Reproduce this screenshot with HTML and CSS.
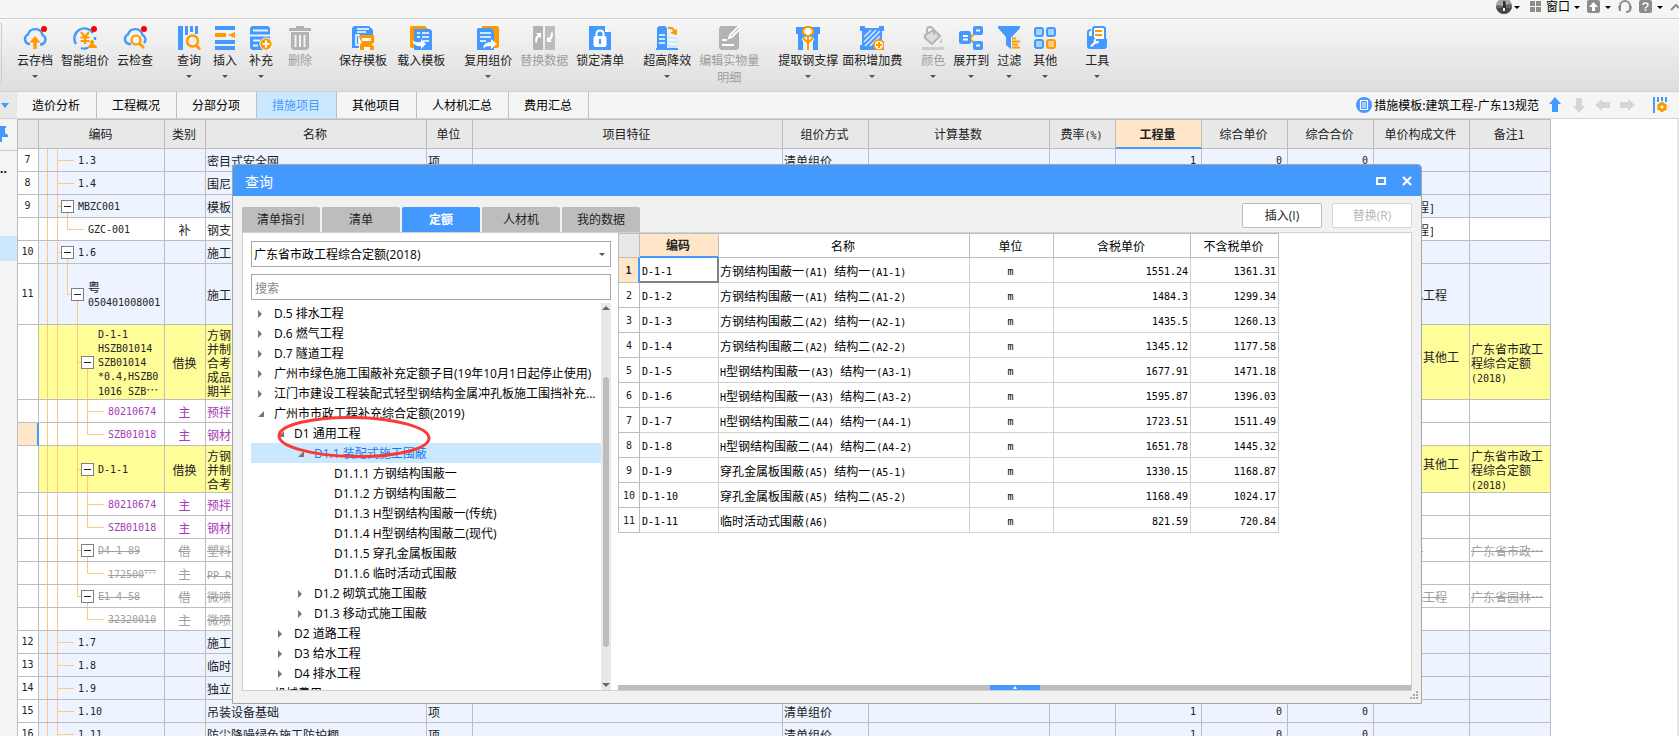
FILE: index.html
```html
<!DOCTYPE html>
<html lang="zh-CN">
<head>
<meta charset="utf-8">
<title>措施项目</title>
<link rel="stylesheet" href="styles.css">
</head>
<body>
<header class="topbar">
  <button class="tb avatar" aria-label="用户"><svg width="16" height="16" viewBox="0 0 16 16"><circle cx="8" cy="7" r="8" fill="#a4a8a8"/><path d="M0 7h16a8 8 0 0 1-16 0z" fill="#4c4742"/><path d="M0 7q3-2 5 0t6-1 5 1v2H0z" fill="#6d6963"/><path d="M7 2h2l1 4v6H7V6z" fill="#333"/><path d="M7 9h2v3H7z" fill="#eee"/></svg><i class="caret"></i></button>
  <button class="tb window"><svg width="12" height="12" viewBox="0 0 12 12" fill="#8c8c8c"><path d="M0 0h5v5H0zM6 0h5v5H6zM0 6h5v5H0zM6 6h5v5H6z"/></svg><span>窗口</span><i class="caret"></i></button>
  <button class="tb" aria-label="升级"><svg width="14" height="14" viewBox="0 0 14 14"><rect width="13" height="13" rx="2" fill="#8c8c8c"/><path d="M6.500 2l4.500 5H8v4H5V7H2z" fill="#fff"/></svg><i class="caret"></i></button>
  <button class="tb" aria-label="客服"><svg width="14" height="14" viewBox="0 0 14 14"><path d="M2 8V6a5 5 0 0 1 10 0v3q0 3-4 3" fill="none" stroke="#8c8c8c" stroke-width="2"/><path d="M0 6h3v5H1zM11 6h3l-1 5h-2z" fill="#8c8c8c"/></svg></button>
  <button class="tb" aria-label="帮助"><svg width="14" height="14" viewBox="0 0 14 14"><rect width="13" height="13" rx="2" fill="#8c8c8c"/><path d="M4 5q0-2 2.500-2T9 5q0 1-1.500 2T6.500 8.500" fill="none" stroke="#fff" stroke-width="1.500"/><path d="M5.700 9.500h1.600V11H5.700z" fill="#fff"/></svg><i class="caret"></i></button>
  <button class="tb" aria-label="收起"><svg width="9" height="8" viewBox="0 0 9 8"><path d="M1 7l5-5 3 3" fill="none" stroke="#8c8c8c" stroke-width="2"/></svg></button>
</header>

<nav class="ribbon">
  <div class="edge"></div>
  <div class="group wide">
    <button class="rb"><svg class="ic" viewBox="0 0 24 24"><path d="M7 18H6a5 5 0 0 1-1-9.500A7.500 7.500 0 0 1 19.500 9 5 5 0 0 1 18 18.500h-1" fill="none" stroke="#49f" stroke-width="2.400"/><path d="M12 10l5.500 6.500h-3.800V23h-3.400v-6.500H6.500z" fill="#f90"/><circle cx="21" cy="3" r="3" fill="#f00"/></svg>云存档<i class="caret"></i></button>
    <button class="rb"><svg class="ic" viewBox="0 0 24 24"><path d="M20 7A10 10 0 1 0 3 18M8 22q4 1.500 7-.5M22 11v3" fill="none" stroke="#49f" stroke-width="2.400"/><path d="M8 6l4 5 4-5M12 11v7M7.500 11.500h9M7.500 15h9" fill="none" stroke="#f90" stroke-width="2.200"/><path d="M15 22q0-3 3-4a2 2 0 1 1 2 0q4 1 4 4z" fill="#f90"/><circle cx="21" cy="3" r="3" fill="#f00"/></svg>智能组价</button>
    <button class="rb"><svg class="ic" viewBox="0 0 24 24"><path d="M8 18H6a5 5 0 0 1-1-9.500A7.500 7.500 0 0 1 19.500 9 5 5 0 0 1 21 17" fill="none" stroke="#49f" stroke-width="2.400"/><circle cx="13" cy="14" r="4.500" fill="#f1f1f1" stroke="#f90" stroke-width="2.200"/><path d="M16 17l5 5" stroke="#f90" stroke-width="2.600"/><circle cx="21" cy="3" r="3" fill="#f00"/></svg>云检查</button>
  </div>
  <div class="group gap12 wide">
    <button class="rb"><svg class="ic" viewBox="0 0 24 24"><path d="M1 0h5v24H1zM8 0h3v9H8zM13 0h3v6h-3zM18 0h3v8h-3z" fill="#49f"/><circle cx="15.500" cy="15" r="5.500" fill="none" stroke="#f90" stroke-width="2.400"/><path d="M19 19l4 4.500" stroke="#f90" stroke-width="2.800"/></svg>查询<i class="caret"></i></button>
    <button class="rb"><svg class="ic" viewBox="0 0 24 24"><path d="M2 0h20v4H2zM2 14h20v4H2zM2 20h20v4H2z" fill="#49f"/><path d="M2 7h11v4H2zM15 9l7-3v6z" fill="#f90"/></svg>插入<i class="caret"></i></button>
    <button class="rb"><svg class="ic" viewBox="0 0 24 24"><path d="M3 0h16l2 2v20l-2 2H3l-2-2V2z" fill="#49f"/><path d="M4 4.500h15M1 9.500h20M4 14.500h7M4 19.500h5" stroke="#e8f3ff" stroke-width="2"/><circle cx="17" cy="18" r="6.500" fill="#fff"/><circle cx="17" cy="18" r="5.700" fill="#f90"/><path d="M17 14.500v7M13.500 18h7" stroke="#fff" stroke-width="2"/></svg>补充<i class="caret"></i></button>
    <button class="rb off pad3" disabled><svg class="ic" viewBox="0 0 24 24"><path d="M1 2h7V0h8v2h7v3H1zM3 6h18v16l-2 2H5l-2-2z" fill="#b3b3b3"/><path d="M7.500 9v12M12 9v12M16.500 9v12" stroke="#f4f4f4" stroke-width="2"/></svg>删除</button>
  </div>
  <div class="group gap10">
    <button class="rb"><svg class="ic" viewBox="0 0 24 24"><path d="M3 0h15l4 4v18H1V2z" fill="#49f"/><path d="M6 3h12M6 6h9M5 9h3v10H5z" fill="none" stroke="#fff" stroke-width="1.500"/><path d="M8 10h15v14H8z" fill="#fff"/><path d="M8 11q0-2 2-2h13v8l-2 1v1l2 1v4H9v-6l2-1z" fill="#f90"/><path d="M11 12h9v3h-9zM13 21h6v3h-6z" fill="#fff"/></svg>保存模板</button>
    <button class="rb"><svg class="ic" viewBox="0 0 24 24"><path d="M1 2q0-2 2-2h13l3 3v19H3q-2 0-2-2z" fill="#f90"/><path d="M5 3h16l2 2v19H5z" fill="#49f"/><path d="M8 7h3M13 7h7M8 11h3M13 11h7M14 15h6" stroke="#fff" stroke-width="1.600"/><path d="M3 14q3 3 9 2v-3l5 5-5 5v-3q-7 1-9-6z" fill="#fff"/></svg>载入模板</button>
  </div>
  <div class="group gap8">
    <button class="rb"><svg class="ic" viewBox="0 0 24 24"><path d="M6 0h15q2 0 2 2v18q0 2-3 2H6z" fill="#f90"/><path d="M1 4q0-2 2-2h12l3 3v19H1z" fill="#49f"/><path d="M4 7h11M4 11h11M4 15h6" stroke="#fff" stroke-width="1.600"/><path d="M7 22q1-6 8-6v-3l6 5-6 5v-3q-5 0-8 2z" fill="#fff"/></svg>复用组价<i class="caret"></i></button>
    <button class="rb off" disabled><svg class="ic" viewBox="0 0 24 24"><path d="M1 0h10v24H1z" fill="#b3b3b3"/><path d="M13 0h10v24H13z" fill="#bdbdbd"/><path d="M3 16q0-6 3-7L4 7h5v5l-2-1q-2 1-2 6zM21 7q0 6-3 7l2 2h-5v-5l2 1q2-1 2-6z" fill="#fff"/></svg>替换数据</button>
    <button class="rb"><svg class="ic" viewBox="0 0 24 24"><path d="M1 0h16l6 6v18H1z" fill="#49f"/><path d="M17 0l6 6h-6z" fill="#fff"/><rect x="5.500" y="10" width="13" height="11" rx="2" fill="#fff"/><path d="M8.500 11V8q0-3.500 3.500-3.500T15.500 8v3" fill="none" stroke="#fff" stroke-width="2"/><path d="M11 13h2v5h-2z" fill="#49f"/></svg>锁定清单</button>
  </div>
  <div class="group gap8">
    <button class="rb"><svg class="ic" viewBox="0 0 24 24"><path d="M2 2l2-2h6l2 2v20H2z" fill="#49f"/><path d="M13 11h9v11h-9z" fill="#cce8ff"/><path d="M4 9h6M4 13h6M4 17h6M14 14h7M14 18h7" stroke="#fff" stroke-width="1.600"/><path d="M1 22h22v2H1z" fill="#49f"/><path d="M13 2q6-1 6 4" fill="none" stroke="#f90" stroke-width="2.200"/><path d="M15 7l7-4v6z" fill="#f90"/></svg>超高降效<i class="caret"></i></button>
    <button class="rb off" disabled><svg class="ic" viewBox="0 0 24 24"><path d="M4 0h17l1 2v20l-2 2H4l-2-2V2z" fill="#b3b3b3"/><path d="M22 0l-9 9-1 3 3-1 9-9" fill="none" stroke="#fff" stroke-width="1.800"/><path d="M5 14h5M5 19h12" stroke="#fff" stroke-width="2"/></svg>编辑实物量<br>明细</button>
  </div>
  <div class="group gap4">
    <button class="rb"><svg class="ic" viewBox="0 0 24 24"><path d="M0 1h24v7h-2v16h-5V14l-5-4-5 4v10H2V8H0z" fill="#49f"/><path d="M12 9v15M12 17l-5-5M12 17l5-5" fill="none" stroke="#fff" stroke-width="4"/><path d="M7 4l3-3h4l3 3v3l-4 3h-2L7 7z" fill="#fff" stroke="#f90" stroke-width="2"/><path d="M12 9v15M12 17l-5-5M12 17l5-5" fill="none" stroke="#f90" stroke-width="2"/></svg>提取钢支撑<i class="caret"></i></button>
    <button class="rb"><svg class="ic" viewBox="0 0 24 24"><path d="M0 0h5v2h14V0h5v5h-2v14h2v5H0v-5h2V5H0z" fill="#49f"/><path d="M4 11l7-7M4 16L16 4M5 20L20 5M10 20L20 10" stroke="#d9ecff" stroke-width="1.500"/><circle cx="19" cy="19" r="5" fill="#fff" stroke="#f90" stroke-width="2"/><path d="M19 16v6M16 19h6" stroke="#f90" stroke-width="2"/></svg>面积增加费<i class="caret"></i></button>
  </div>
  <div class="group gap8 wide">
    <button class="rb off" disabled><svg class="ic" viewBox="0 0 24 24"><path d="M4 9l9-5 6 6-8 8-7-6z" fill="#ddd" stroke="#b3b3b3" stroke-width="2"/><path d="M6 8V4q0-3 3-3t4 4v4" fill="none" stroke="#b3b3b3" stroke-width="2"/><path d="M19 15l2-3v5h-2z" fill="#c4c4c4"/><path d="M1 21h22v3H1z" fill="#ccc"/></svg>颜色<i class="caret"></i></button>
    <button class="rb"><svg class="ic" viewBox="0 0 24 24"><path d="M11 12l6-6M11 13l6 6" stroke="#f90" stroke-width="2"/><rect y="5" width="12" height="13" rx="2.500" fill="#49f"/><rect x="14" width="10" height="9" rx="2" fill="#49f"/><rect x="14" y="15" width="10" height="9" rx="2" fill="#49f"/><path d="M4 10h5M4 13.500h5M17 4.500h4M17 19.500h4" stroke="#fff" stroke-width="1.800"/></svg>展开到<i class="caret"></i></button>
    <button class="rb"><svg class="ic" viewBox="0 0 24 24"><path d="M1 0h22v2l-8 9v13l-6-5v-8L1 2z" fill="#49f"/><path d="M14 11h10v13H14z" fill="#ececec"/><path d="M15 12.500h4M15 15.500h8M15 18.500h6M15 21.500h8" stroke="#f90" stroke-width="1.800"/></svg>过滤<i class="caret"></i></button>
    <button class="rb pad4"><svg class="ic" viewBox="0 0 24 24" fill="#a8d2ff" stroke="#49f" stroke-width="2"><rect x="2" y="2" width="8" height="8" rx="2"/><rect x="14" y="2" width="8" height="8" rx="2"/><rect x="2" y="14" width="8" height="8" rx="2"/><rect x="14" y="14" width="8" height="8" rx="2" fill="#ffcb80" stroke="#f90"/></svg>其他<i class="caret"></i></button>
  </div>
  <div class="group">
    <button class="rb"><svg class="ic" viewBox="0 0 24 24"><path d="M3 10V6q0-2 3-2" fill="none" stroke="#49f" stroke-width="2"/><path d="M8 3q0-2 2-2h8q2 0 2 2v12H8z" fill="#fff" stroke="#49f" stroke-width="2"/><path d="M10 5h7M10 9h7" stroke="#f90" stroke-width="2"/><path d="M2 10h6l3 3h11v7q0 3-3 3H5q-3 0-3-3z" fill="#49f"/><path d="M5 20l4-4q-1-3 2-4v3h3q0 3-4 3l-3 3z" fill="#fff"/></svg>工具<i class="caret"></i></button>
  </div>
</nav>

<div class="tabstrip">
  <div class="tabs-left"><i class="caret blue"></i></div>
  <button class="tab">造价分析</button><button class="tab">工程概况</button><button class="tab">分部分项</button><button class="tab on">措施项目</button><button class="tab">其他项目</button><button class="tab">人材机汇总</button><button class="tab">费用汇总</button>
  <div class="tools">
    <button class="tpl"><svg width="16" height="16" viewBox="0 0 16 16"><circle cx="8" cy="8" r="8" fill="#49f"/><path d="M4.500 3.500h7v9h-7z" fill="none" stroke="#fff" stroke-width="1.200"/><path d="M6 6h4M6 8h4M6 10h4" stroke="#fff"/></svg>措施模板:建筑工程-广东13规范</button>
    <button class="mv" aria-label="上移"><svg viewBox="0 0 16 16"><path d="M8 0l6 7h-3v8H5V7H2z" fill="#49f"/></svg></button>
    <button class="mv" aria-label="下移"><svg viewBox="0 0 16 16"><path d="M8 16l6-7h-3V1H5v8H2z" fill="#d6d6d6"/></svg></button>
    <button class="mv" aria-label="左移"><svg viewBox="0 0 16 16"><path d="M0 8l7-6v3h8v6H7v3z" fill="#d6d6d6"/></svg></button>
    <button class="mv" aria-label="右移"><svg viewBox="0 0 16 16"><path d="M16 8L9 2v3H1v6h8v3z" fill="#d6d6d6"/></svg></button>
    <button class="mv set" aria-label="列设置"><svg viewBox="0 0 16 16"><path d="M1 0h2v16H1zM5 0h2v5H5zM9 0h2v4H9zM13 0h2v5h-2z" fill="#49f"/><circle cx="10" cy="10" r="3.200" fill="none" stroke="#f90" stroke-width="3"/><path d="M10 5v10M5.500 7.500l9 5M5.500 12.500l9-5" stroke="#f90" stroke-width="2"/><circle cx="10" cy="10" r="1.500" fill="#fff"/></svg></button>
  </div>
</div>

<main class="work">
  <aside class="side">
    <div class="pin"><svg width="8" height="16" viewBox="0 0 8 16"><path d="M0 0h6v2H5v5l3 2v2H2v5H0z" fill="#49f"/></svg></div>
    <div class="dots">..</div>
    <div class="sel"></div>
  </aside>
  <table class="grid">
    <colgroup><col class="w22"><col class="w126"><col class="w41"><col class="w221"><col class="w46"><col class="w310"><col class="w86"><col class="w181"><col class="w66"><col class="w86"><col class="w86"><col class="w86"><col class="w96"><col class="w81"></colgroup>
    <thead><tr><th></th><th>编码</th><th>类别</th><th>名称</th><th>单位</th><th>项目特征</th><th>组价方式</th><th>计算基数</th><th>费率<span class="m">(%)</span></th><th class="cur">工程量</th><th>综合单价</th><th>综合合价</th><th>单价构成文件</th><th>备注1</th></tr></thead>
    <tbody>
      <tr class="b"><th>7</th><td class="t leaf1"><div class="n p40">1.3</div></td><td></td><td>密目式安全网</td><td>项</td><td></td><td>清单组价</td><td></td><td></td><td class="r">1</td><td class="r">0</td><td class="r">0</td><td></td><td></td></tr>
      <tr class="b"><th>8</th><td class="t leaf1"><div class="n p40">1.4</div></td><td></td><td>围尼</td><td></td><td></td><td></td><td></td><td></td><td></td><td></td><td></td><td></td><td></td></tr>
      <tr class="b"><th>9</th><td class="t open1"><div class="n p22"><button class="tg" aria-label="折叠"></button>MBZC001</div></td><td></td><td>模板</td><td></td><td></td><td></td><td></td><td></td><td></td><td></td><td></td><td><span class="m">[</span>建筑工程<span class="m">]</span></td><td></td></tr>
      <tr><th></th><td class="t end2"><div class="n p50">GZC-001</div></td><td class="c">补</td><td>钢支</td><td></td><td></td><td></td><td></td><td></td><td></td><td></td><td></td><td><span class="m">[</span>建筑工程<span class="m">]</span></td><td></td></tr>
      <tr class="b"><th>10</th><td class="t open1"><div class="n p22"><button class="tg" aria-label="折叠"></button>1.6</div></td><td></td><td>施工</td><td></td><td></td><td></td><td></td><td></td><td></td><td></td><td></td><td></td><td></td></tr>
      <tr class="b h61"><th>11</th><td class="t open2"><div class="n p32"><button class="tg" aria-label="折叠"></button><div><span class="cjk">粤</span><br>050401008001</div></div></td><td></td><td>施工</td><td></td><td></td><td></td><td></td><td></td><td></td><td></td><td></td><td>园林绿化工程</td><td></td></tr>
      <tr class="y h75"><th></th><td class="t open3"><div class="n p42"><button class="tg" aria-label="折叠"></button><div>D-1-1<br>HSZB01014<br>SZB01014<br>*0.4,HSZB0<br>1016 SZB<span class="cjk">…</span></div></div></td><td class="c">借换</td><td>方钢<br>并制<br>合考<br>成品<br>期半</td><td></td><td></td><td></td><td></td><td></td><td></td><td></td><td></td><td class="clip">装配式：其他工</td><td>广东省市政工<br>程综合定额<br><span class="m">(2018)</span></td></tr>
      <tr class="v"><th></th><td class="t mid4"><div class="n p70">80210674</div></td><td class="c">主</td><td>预拌</td><td></td><td></td><td></td><td></td><td></td><td></td><td></td><td></td><td></td><td></td></tr>
      <tr class="v"><th class="cur-row"></th><td class="t end4"><div class="n p70">SZB01018</div></td><td class="c">主</td><td>钢材</td><td></td><td></td><td></td><td></td><td></td><td></td><td></td><td></td><td></td><td></td></tr>
      <tr class="y h47"><th></th><td class="t open3"><div class="n p42"><button class="tg" aria-label="折叠"></button>D-1-1</div></td><td class="c">借换</td><td>方钢<br>并制<br>合考</td><td></td><td></td><td></td><td></td><td></td><td></td><td></td><td></td><td class="clip">装配式：其他工</td><td>广东省市政工<br>程综合定额<br><span class="m">(2018)</span></td></tr>
      <tr class="v"><th></th><td class="t mid4"><div class="n p70">80210674</div></td><td class="c">主</td><td>预拌</td><td></td><td></td><td></td><td></td><td></td><td></td><td></td><td></td><td></td><td></td></tr>
      <tr class="v"><th></th><td class="t end4"><div class="n p70">SZB01018</div></td><td class="c">主</td><td>钢材</td><td></td><td></td><td></td><td></td><td></td><td></td><td></td><td></td><td></td><td></td></tr>
      <tr class="x"><th></th><td class="t open3"><div class="n p42"><button class="tg" aria-label="折叠"></button><s>D4-1-89</s></div></td><td class="c">借</td><td>塑料</td><td></td><td></td><td></td><td></td><td></td><td></td><td></td><td></td><td>市政工程</td><td>广东省市政…</td></tr>
      <tr class="x"><th></th><td class="t end4"><div class="n p70"><s>172500<span class="cjk">…</span></s></div></td><td class="c">主</td><td><s class="m">PP-R</s></td><td></td><td></td><td></td><td></td><td></td><td></td><td></td><td></td><td></td><td></td></tr>
      <tr class="x"><th></th><td class="t last3"><div class="n p42"><button class="tg" aria-label="折叠"></button><s>E1-4-58</s></div></td><td class="c">借</td><td>微喷</td><td></td><td></td><td></td><td></td><td></td><td></td><td></td><td></td><td>园林绿化工程</td><td>广东省园林…</td></tr>
      <tr class="x"><th></th><td class="t only4"><div class="n p70"><s>32320010</s></div></td><td class="c">主</td><td>微喷</td><td></td><td></td><td></td><td></td><td></td><td></td><td></td><td></td><td></td><td></td></tr>
      <tr class="b"><th>12</th><td class="t leaf1"><div class="n p40">1.7</div></td><td></td><td>施工</td><td></td><td></td><td></td><td></td><td></td><td></td><td></td><td></td><td></td><td></td></tr>
      <tr class="b"><th>13</th><td class="t leaf1"><div class="n p40">1.8</div></td><td></td><td>临时</td><td></td><td></td><td></td><td></td><td></td><td></td><td></td><td></td><td></td><td></td></tr>
      <tr class="b"><th>14</th><td class="t leaf1"><div class="n p40">1.9</div></td><td></td><td>独立</td><td></td><td></td><td></td><td></td><td></td><td></td><td></td><td></td><td></td><td></td></tr>
      <tr class="b"><th>15</th><td class="t leaf1"><div class="n p40">1.10</div></td><td></td><td>吊装设备基础</td><td>项</td><td></td><td>清单组价</td><td></td><td></td><td class="r">1</td><td class="r">0</td><td class="r">0</td><td></td><td></td></tr>
      <tr class="b"><th>16</th><td class="t leaf1"><div class="n p40">1.11</div></td><td></td><td>防尘降噪绿色施工防护棚</td><td>项</td><td></td><td>清单组价</td><td></td><td></td><td class="r">1</td><td class="r">0</td><td class="r">0</td><td></td><td></td></tr>
    </tbody>
  </table>
</main>

<section class="dialog" role="dialog" aria-labelledby="dlg-title">
  <div class="title"><h2 id="dlg-title">查询</h2>
    <button aria-label="最大化"><svg width="10" height="10" viewBox="0 0 10 10"><path d="M1 2h8v6H1z" fill="none" stroke="#fff" stroke-width="2"/></svg></button>
    <button aria-label="关闭"><svg width="10" height="10" viewBox="0 0 10 10"><path d="M1 1l8 8M9 1L1 9" stroke="#fff" stroke-width="2.200"/></svg></button>
  </div>
  <div class="bar">
    <button class="dt">清单指引</button><button class="dt">清单</button><button class="dt on">定额</button><button class="dt">人材机</button><button class="dt">我的数据</button>
    <div class="acts"><button class="act">插入(I)</button><button class="act" disabled>替换(R)</button></div>
  </div>
  <div class="panel">
    <div class="left">
      <div class="combo"><select aria-label="定额库"><option>广东省市政工程综合定额(2018)</option></select><i class="caret"></i></div>
      <input class="search" type="text" placeholder="搜索" aria-label="搜索">
      <div class="treebox">
        <ul class="tree">
          <li><i class="cl"></i>D.5 排水工程</li>
          <li><i class="cl"></i>D.6 燃气工程</li>
          <li><i class="cl"></i>D.7 隧道工程</li>
          <li><i class="cl"></i>广州市绿色施工围蔽补充定额子目(19年10月1日起停止使用)</li>
          <li><i class="cl"></i>江门市建设工程装配式轻型钢结构金属冲孔板施工围挡补充...</li>
          <li><i class="op"></i>广州市市政工程补充综合定额(2019)</li>
          <li class="l1"><i class="op"></i>D1 通用工程</li>
          <li class="l2 on"><i class="op"></i>D1.1 装配式施工围蔽</li>
          <li class="l3"><i></i>D1.1.1 方钢结构围蔽一</li>
          <li class="l3"><i></i>D1.1.2 方钢结构围蔽二</li>
          <li class="l3"><i></i>D1.1.3 H型钢结构围蔽一(传统)</li>
          <li class="l3"><i></i>D1.1.4 H型钢结构围蔽二(现代)</li>
          <li class="l3"><i></i>D1.1.5 穿孔金属板围蔽</li>
          <li class="l3"><i></i>D1.1.6 临时活动式围蔽</li>
          <li class="l2"><i class="cl"></i>D1.2 砌筑式施工围蔽</li>
          <li class="l2"><i class="cl"></i>D1.3 移动式施工围蔽</li>
          <li class="l1"><i class="cl"></i>D2 道路工程</li>
          <li class="l1"><i class="cl"></i>D3 给水工程</li>
          <li class="l1"><i class="cl"></i>D4 排水工程</li>
          <li><i></i>机械费用</li>
        </ul>
        <div class="sb"><i class="up"></i><div class="thumb"></div><i class="down"></i></div>
      </div>
    </div>
    <div class="right">
      <table class="list">
        <colgroup><col class="w22"><col class="w79"><col class="w251"><col class="w84"><col class="w137"><col class="w88"></colgroup>
        <thead><tr><th></th><th class="cur">编码</th><th>名称</th><th>单位</th><th>含税单价</th><th>不含税单价</th></tr></thead>
        <tbody>
          <tr><th class="cur">1</th><td class="cell">D-1-1</td><td class="nm">方钢结构围蔽一<span class="m">(A1) </span>结构一<span class="m">(A1-1)</span></td><td>m</td><td>1551.24</td><td>1361.31</td></tr>
          <tr><th>2</th><td>D-1-2</td><td class="nm">方钢结构围蔽一<span class="m">(A1) </span>结构二<span class="m">(A1-2)</span></td><td>m</td><td>1484.3</td><td>1299.34</td></tr>
          <tr><th>3</th><td>D-1-3</td><td class="nm">方钢结构围蔽二<span class="m">(A2) </span>结构一<span class="m">(A2-1)</span></td><td>m</td><td>1435.5</td><td>1260.13</td></tr>
          <tr><th>4</th><td>D-1-4</td><td class="nm">方钢结构围蔽二<span class="m">(A2) </span>结构二<span class="m">(A2-2)</span></td><td>m</td><td>1345.12</td><td>1177.58</td></tr>
          <tr><th>5</th><td>D-1-5</td><td class="nm"><span class="m">H</span>型钢结构围蔽一<span class="m">(A3) </span>结构一<span class="m">(A3-1)</span></td><td>m</td><td>1677.91</td><td>1471.18</td></tr>
          <tr><th>6</th><td>D-1-6</td><td class="nm"><span class="m">H</span>型钢结构围蔽一<span class="m">(A3) </span>结构二<span class="m">(A3-2)</span></td><td>m</td><td>1595.87</td><td>1396.03</td></tr>
          <tr><th>7</th><td>D-1-7</td><td class="nm"><span class="m">H</span>型钢结构围蔽二<span class="m">(A4) </span>结构一<span class="m">(A4-1)</span></td><td>m</td><td>1723.51</td><td>1511.49</td></tr>
          <tr><th>8</th><td>D-1-8</td><td class="nm"><span class="m">H</span>型钢结构围蔽二<span class="m">(A4) </span>结构二<span class="m">(A4-2)</span></td><td>m</td><td>1651.78</td><td>1445.32</td></tr>
          <tr><th>9</th><td>D-1-9</td><td class="nm">穿孔金属板围蔽<span class="m">(A5) </span>结构一<span class="m">(A5-1)</span></td><td>m</td><td>1330.15</td><td>1168.87</td></tr>
          <tr><th>10</th><td>D-1-10</td><td class="nm">穿孔金属板围蔽<span class="m">(A5) </span>结构二<span class="m">(A5-2)</span></td><td>m</td><td>1168.49</td><td>1024.17</td></tr>
          <tr><th>11</th><td>D-1-11</td><td class="nm">临时活动式围蔽<span class="m">(A6)</span></td><td>m</td><td>821.59</td><td>720.84</td></tr>
        </tbody>
      </table>
      <div class="split"><button aria-label="展开"><svg width="50" height="5" viewBox="0 0 50 5"><path d="M25 1l2 3h-4z" fill="#fff"/></svg></button></div>
    </div>
  </div>
  <svg class="grip" width="8" height="8" viewBox="0 0 8 8" fill="#aaa"><path d="M6 0h2v2H6zM3 3h2v2H3zM6 3h2v2H6zM0 6h2v2H0zM3 6h2v2H3zM6 6h2v2H6z"/></svg>
  <svg class="mark" width="156" height="46" viewBox="0 0 156 46"><ellipse cx="78" cy="23" rx="75" ry="19.500" fill="none" stroke="#f93a36" stroke-width="3" transform="rotate(1 78 23)"/></svg>
</section>
</body>
</html>
```
FILE: styles.css
```css
* { box-sizing: border-box; }
body {
  margin: 0;
  height: 100vh;
  overflow: hidden;
  position: relative;
  display: flex;
  flex-direction: column;
  background: #fff;
  color: #222;
  font: 12px/16px "Open Sans", "Noto Sans CJK SC", sans-serif;
}
button, input, select { font: inherit; color: inherit; margin: 0; padding: 0; border: 0; background: none; }
button svg { display: block; flex: none; }

.caret { display: block; flex: none; width: 0; height: 0; border: 3px solid transparent; border-top-color: #555; border-bottom: 0; }
.caret.blue { border-width: 5px 4px 0; border-top-color: #49f; }

.topbar { display: flex; justify-content: flex-end; align-items: flex-start; gap: 7px; height: 19px; flex: none; background: #f5f5f5; border-bottom: 1px solid #d0d0d0; }
.tb { display: flex; align-items: center; gap: 4px; height: 14px; color: #000; }
.tb .caret { border-top-color: #000; }
.tb.avatar { gap: 2px; margin-right: 3px; }
.tb.window { gap: 4px; }

.ribbon { display: flex; gap: 19px; height: 73px; flex: none; background: linear-gradient(#f6f6f6, #dedede); border-bottom: 1px solid #cfcfcf; }
.edge { width: 2px; height: 62px; margin: 4px -4px 0 0; border: 1px solid #ccc; border-left: 0; border-radius: 0 4px 4px 0; }
.group { display: flex; align-items: flex-start; gap: 8px; padding-top: 7px; }
.group.wide { margin-right: 5px; }
.gap12 { gap: 12px; }
.gap10 { gap: 10px; }
.gap4 { gap: 4px; }
.rb { text-align: center; line-height: 17px; white-space: nowrap; }
.rb .ic { width: 24px; height: 24px; margin: 0 auto 2px; }
.rb .caret { margin: 6px auto 0; }
.rb.off { color: #9d9d9d; }
.pad3 { padding: 0 3px; }
.pad4 { padding: 0 4px; }

.tabstrip { display: flex; height: 27px; flex: none; background: #f5f5f5; border-bottom: 1px solid #d4d4d4; }
.tabs-left { width: 17px; background: #e8e8e8; padding: 11px 0 0 1px; }
.tab { padding: 2px 16px 0 15px; border-right: 1px solid #c0c0c0; color: #000; }
.tab.on { background: #cce8ff; color: #49f; }
.tools { display: flex; align-items: center; margin-left: auto; gap: 8px; padding-right: 11px; }
.tpl { display: flex; align-items: center; gap: 2px; color: #000; font-family: "Noto Sans CJK SC", sans-serif; }
.mv { width: 16px; }
.set { margin-left: 9px; }

.work { display: flex; flex: 1; min-height: 0; overflow: hidden; align-items: flex-start; border-right: 2px solid #e4e4e4; }
.side { width: 17px; flex: none; align-self: stretch; background: #f4f4f4; }
.pin { height: 32px; padding-top: 7px; border-bottom: 1px solid #ccc; }
.dots { height: 85px; padding-top: 10px; font-weight: 700; color: #000; }
.sel { height: 25px; background: #cce8ff; }

table { table-layout: fixed; border-collapse: separate; border-spacing: 0; flex: none; }
.w22 { width: 22px; } .w126 { width: 126px; } .w41 { width: 41px; } .w221 { width: 221px; } .w46 { width: 46px; }
.w310 { width: 310px; } .w86 { width: 86px; } .w181 { width: 181px; } .w66 { width: 66px; } .w96 { width: 96px; }
.w81 { width: 81px; } .w79 { width: 79px; } .w251 { width: 251px; } .w84 { width: 84px; } .w137 { width: 137px; } .w88 { width: 88px; }
.m { font: 10px/10px "DejaVu Sans Mono", monospace; white-space: pre; }

.grid { width: 1534px; border-top: 1px solid #bdbdbd; font-family: "Noto Sans CJK SC", sans-serif; line-height: 14px; white-space: nowrap; }
.grid tr { height: 23px; }
.grid th, .grid td { padding: 1px 2px 0 1px; border-right: 1px solid #bdbdbd; border-bottom: 1px solid #bdbdbd; font-weight: 400; text-align: left; }
.grid th { text-align: center; }
.grid tr > :first-child { border-left: 1px solid #bdbdbd; }
.grid thead tr { height: 29px; }
.grid thead th { background: #e8e8e8; padding: 0 2px 0 0; }
.grid thead .cur { background: #ffe6c8; border-bottom: 2px solid #49f; font-weight: 700; }
.grid tbody th { background: #fff; padding: 0 1px 0 0; font: 10px/14px "DejaVu Sans Mono", monospace; }
.grid .cur-row { background: #ffe6c8; border-right: 2px solid #49f; }
.grid .b { background: #edf4ff; }
.grid .y { background: #fffd98; }
.grid .v { color: #a33cb4; }
.grid .x { color: #a0a0a0; }
.grid .x td { text-decoration: line-through; }
.grid .x td.t, .grid .x td:has(s) { text-decoration: none; }
.grid .h61 { height: 61px; }
.grid .h75 { height: 75px; }
.grid .h47 { height: 47px; }
.grid .c { text-align: center; }
.grid .r { text-align: right; padding: 2px 5px 0 0; font: 10px/14px "DejaVu Sans Mono", monospace; }
.grid .clip { padding-bottom: 12px; }
.grid .t { padding: 0; color: inherit; background-repeat: no-repeat; }
.n { display: flex; align-items: center; gap: 4px; padding-top: 2px; font: 10px/14px "DejaVu Sans Mono", monospace; }
.cjk { font: 12px/12px "Noto Sans CJK SC", sans-serif; }
.p22 { padding-left: 22px; } .p32 { padding-left: 32px; } .p42 { padding-left: 42px; }
.p40 { padding-left: 39px; } .p50 { padding-left: 49px; } .p70 { padding-left: 69px; }
.tg { flex: none; width: 13px; height: 13px; margin-bottom: 2px; border: 1px solid #808080; background: #fff linear-gradient(#222, #222) center / 7px 1px no-repeat; }

/* tree guide lines: verticals every 10px, then the connector */
.t { --l: linear-gradient(#ffc880, #ffc880); background-image: var(--l), var(--l), var(--l), var(--l), var(--l); }
.leaf1 { background-position: 8px 0, 18px 0, 18px 50%, 18px 50%, 18px 50%; background-size: 1px 100%, 1px 100%, 17px 1px, 1px 1px, 1px 1px; }
.open1 { background-position: 8px 0, 18px 0, 18px 50%, 28px 100%, 28px 100%; background-size: 1px 100%, 1px 100%, 5px 1px, 1px 50%, 1px 1px; }
.end2 { background-position: 8px 0, 18px 0, 28px 0, 28px 50%, 28px 0; background-size: 1px 100%, 1px 100%, 1px 50%, 17px 1px, 1px 1px; }
.open2 { background-position: 8px 0, 18px 0, 28px 0, 28px 50%, 38px 100%; background-size: 1px 100%, 1px 100%, 1px 50%, 5px 1px, 1px 50%; }
.open3 { background-position: 8px 0, 18px 0, 38px 0, 38px 50%, 48px 100%; background-size: 1px 100%, 1px 100%, 1px 100%, 5px 1px, 1px 50%; }
.last3 { background-position: 8px 0, 18px 0, 38px 0, 38px 50%, 48px 100%; background-size: 1px 100%, 1px 100%, 1px 50%, 5px 1px, 1px 50%; }
.mid4 { background-position: 8px 0, 18px 0, 38px 0, 48px 0, 48px 50%; background-size: 1px 100%, 1px 100%, 1px 100%, 1px 100%, 17px 1px; }
.end4 { background-position: 8px 0, 18px 0, 38px 0, 48px 0, 48px 50%; background-size: 1px 100%, 1px 100%, 1px 100%, 1px 50%, 17px 1px; }
.only4 { background-position: 8px 0, 18px 0, 48px 0, 48px 0, 48px 50%; background-size: 1px 100%, 1px 100%, 1px 50%, 1px 50%, 17px 1px; }

.dialog { position: absolute; top: 164px; left: 232px; right: 257px; bottom: 32px; display: flex; flex-direction: column; background: #f1f1f1; border: 1px solid #a6a6a6; border-radius: 4px 4px 0 0; }
.title { display: flex; align-items: center; gap: 16px; height: 31px; flex: none; padding: 0 9px 0 12px; background: #49f; color: #fff; border-radius: 3px 3px 0 0; }
.title h2 { flex: 1; margin: 0; font-size: 14px; font-weight: 400; padding-top: 3px; }
.bar { display: flex; align-items: flex-end; gap: 2px; height: 36px; flex: none; padding: 0 9px; }
.dt { width: 78px; height: 25px; background: #bdbdbd; border-radius: 2px 2px 0 0; color: #222; }
.dt.on { background: #49f; color: #fff; font-weight: 700; }
.acts { display: flex; gap: 10px; margin: 0 0 4px auto; }
.act { width: 80px; height: 25px; background: #fff; border: 1px solid #bdbdbd; border-radius: 2px; }
.act:disabled { color: #b8b8b8; border-color: #d6d6d6; }
.panel { display: flex; flex: 1; min-height: 0; margin: 0 9px 12px; background: #fff; border: 1px solid #d0d0d0; }
.left { width: 375px; flex: none; display: flex; flex-direction: column; padding: 8px 7px 0 8px; }
.combo, .search { height: 26px; flex: none; border: 1px solid #a8a8a8; background: #fff; color: #000; }
.combo { display: grid; align-items: center; margin-bottom: 7px; }
.combo > * { grid-area: 1 / 1; }
.combo select { height: 24px; padding: 2px 2px 0; appearance: none; outline: 0; }
.combo .caret { justify-self: end; margin-right: 5px; }
.search { padding: 2px 3px 0; }
.search::placeholder { color: #888; opacity: 1; }
.treebox { display: flex; flex: 1; min-height: 0; margin-top: 3px; }
.tree { flex: 1; min-width: 0; margin: 0; padding: 0; list-style: none; overflow: hidden; color: #000; }
.tree li { display: flex; align-items: center; height: 20px; padding: 2px 0 0 7px; white-space: nowrap; }
.tree i { width: 16px; flex: none; }
.tree .cl::before { content: ""; display: block; width: 0; border: 4px solid transparent; border-left-color: #777; border-right: 0; }
.tree .op::before { content: ""; display: block; width: 0; border: 3px solid #777; border-top-color: transparent; border-left-color: transparent; }
.tree .l1 { padding-left: 27px; }
.tree .l2 { padding-left: 47px; }
.tree .l3 { padding-left: 67px; }
.tree .on { background: #cce8ff; color: #1a7aee; }
.sb { width: 10px; flex: none; display: flex; flex-direction: column; align-items: center; background: #e8e8e8; padding: 3px 0; }
.sb .up { border: 4px solid transparent; border-top: 0; border-bottom-color: #666; margin-bottom: 67px; }
.sb .down { border: 4px solid transparent; border-bottom: 0; border-top-color: #666; margin-top: auto; }
.thumb { width: 6px; height: 270px; border-radius: 3px; background: #bdbdbd; }
.right { flex: 1; min-width: 0; display: flex; flex-direction: column; justify-content: space-between; }
.list { width: 661px; font: 10px/14px "DejaVu Sans Mono", monospace; color: #000; border-top: 1px solid #bdbdbd; white-space: nowrap; }
.list tr { height: 25px; }
.list thead tr { height: 24px; }
.list th, .list td { padding: 4px 2px 0; border-right: 1px solid #d0d0d0; border-bottom: 1px solid #d0d0d0; text-align: right; font-weight: 400; }
.list th { text-align: center; padding: 1px 0 0; border-color: #bdbdbd; color: #222; }
.list thead th { padding: 0 2px 0 0; font: 12px/14px "Noto Sans CJK SC", sans-serif; color: #000; }
.list tr > :first-child { border-left: 1px solid #bdbdbd; }
.list thead th:first-child { background: #e8e8e8; }
.list thead .cur { background: #ffe6c8; border-bottom: 2px solid #49f; font-weight: 700; color: #222; }
.list tbody .cur { background: #ffe6c8; border-right: 2px solid #49f; font-weight: 700; }
.list td:nth-child(2) { text-align: left; }
.list .cell { border-right: 2px solid #808080; border-bottom: 2px solid #808080; }
.list td:nth-child(3) { text-align: left; padding: 2px 1px 0; font: 12px/14px "Noto Sans CJK SC", sans-serif; }
.list td:nth-child(4) { text-align: center; padding-right: 4px; }
.split { display: flex; justify-content: center; height: 5px; background: #bdbdbd; }
.split button { background: #49f; width: 50px; }
.grip { position: absolute; right: 3px; bottom: 4px; }
.mark { position: absolute; left: 43px; top: 249px; }
```
